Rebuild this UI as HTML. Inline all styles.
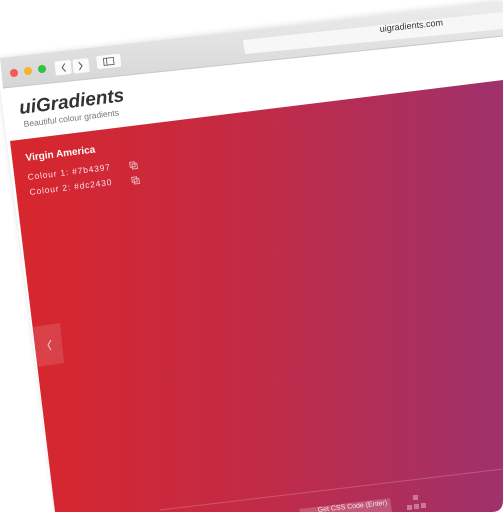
<!DOCTYPE html>
<html><head><meta charset="utf-8"><style>
html,body{margin:0;padding:0;background:#fff;width:503px;height:512px;overflow:hidden}
svg{display:block}
text{font-family:"Liberation Sans",sans-serif}
</style></head><body>
<svg width="503" height="512" viewBox="0 0 503 512" xmlns="http://www.w3.org/2000/svg">
<defs>
<linearGradient id="chrome" x1="0" y1="0" x2="0" y2="1">
<stop offset="0" stop-color="#ececec"/><stop offset="1" stop-color="#d6d6d6"/>
</linearGradient>
<linearGradient id="red" x1="0" y1="0" x2="1" y2="0">
<stop offset="0" stop-color="#d8262c"/><stop offset="0.5" stop-color="#c22b46"/><stop offset="1" stop-color="#9f316c"/>
</linearGradient>
<filter id="sh" x="-10%" y="-10%" width="120%" height="120%"><feGaussianBlur stdDeviation="3"/></filter>
</defs>
<polygon points="0,58 503,0 503,512 56,512 0,90" fill="#000" opacity="0.12" filter="url(#sh)"/>
<polygon points="0,58 503,2 503,512 55,512 0,88" fill="#fff"/>
<polygon points="0,58 503,2 503,36 3,88" fill="url(#chrome)"/>
<line x1="3" y1="88" x2="503" y2="36" stroke="#c8c8c8" stroke-width="1"/>
<polygon points="243,40 503,12 503,29 245,54" fill="#f7f7f7"/>
<text x="0" y="0" font-size="9" fill="#333" transform="translate(380,32) rotate(-6)">uigradients.com</text>
<circle cx="14" cy="73" r="4" fill="#f25a52"/>
<circle cx="28" cy="71" r="4" fill="#f6b42a"/>
<circle cx="42" cy="69" r="4" fill="#2fc33f"/>
<g transform="rotate(-6 70 66)">
<rect x="55" y="60" width="16" height="14" rx="2" fill="#fbfbfb"/>
<rect x="73" y="60" width="16" height="14" rx="2" fill="#fbfbfb"/>
<path d="M65,63 l-3,4 l3,4" stroke="#555" fill="none" stroke-width="1"/>
<path d="M79,63 l3,4 l-3,4" stroke="#555" fill="none" stroke-width="1"/>
<rect x="97" y="59" width="24" height="13" rx="2" fill="#fbfbfb"/>
<rect x="104" y="62" width="10" height="7" fill="none" stroke="#555" stroke-width="0.8"/>
<line x1="107" y1="62" x2="107" y2="69" stroke="#555" stroke-width="0.8"/>
</g>
<text x="0" y="0" font-size="19" font-weight="bold" font-style="italic" fill="#333" font-family="Liberation Serif,serif" transform="translate(20,114) rotate(-7)">uiGradients</text>
<text x="0" y="0" font-size="8.5" fill="#777" transform="translate(24,127) rotate(-7)">Beautiful colour gradients</text>
<path d="M10,141 L503,80 L503,500 Q503,512 492,512 L55,512 Z" fill="url(#red)"/>
<text x="0" y="0" font-size="10" font-weight="bold" fill="#fff" transform="translate(26,161) rotate(-7)">Virgin America</text>
<text x="0" y="0" font-size="8.5" fill="#fde" font-family="Liberation Mono,monospace" letter-spacing="0.8" transform="translate(28,180) rotate(-7)">Colour 1: #7b4397</text>
<text x="0" y="0" font-size="8.5" fill="#fde" font-family="Liberation Mono,monospace" letter-spacing="0.8" transform="translate(30,195) rotate(-7)">Colour 2: #dc2430</text>
<g fill="none" stroke="#f3c6cf" stroke-width="0.8">
<rect x="130" y="162" width="5" height="5" transform="rotate(-7 133 165)"/><rect x="132" y="164" width="5" height="5" transform="rotate(-7 133 165)"/>
<rect x="132" y="177" width="5" height="5" transform="rotate(-7 135 180)"/><rect x="134" y="179" width="5" height="5" transform="rotate(-7 135 180)"/>
</g>
<polygon points="33,327 60,323 64,363 37,367" fill="#fff" opacity="0.12"/>
<path d="M51,340 l-3,5 l3,5" stroke="#f5d0d8" fill="none" stroke-width="1"/>
<line x1="160" y1="510" x2="503" y2="469" stroke="#fff" stroke-opacity="0.2" stroke-width="1"/>
<polygon points="299,509 390,498 392,512 300,512" fill="#fff" opacity="0.2"/>
<text x="0" y="0" font-size="7" fill="#fff" opacity="0.85" transform="translate(318,512) rotate(-6)">Get CSS Code (Enter)</text>
<g fill="#fff" opacity="0.35">
<rect x="413" y="495" width="5" height="5"/>
<rect x="407" y="505" width="5" height="5"/><rect x="414" y="504" width="5" height="5"/><rect x="421" y="503" width="5" height="5"/>
</g>
</svg>
</body></html>
